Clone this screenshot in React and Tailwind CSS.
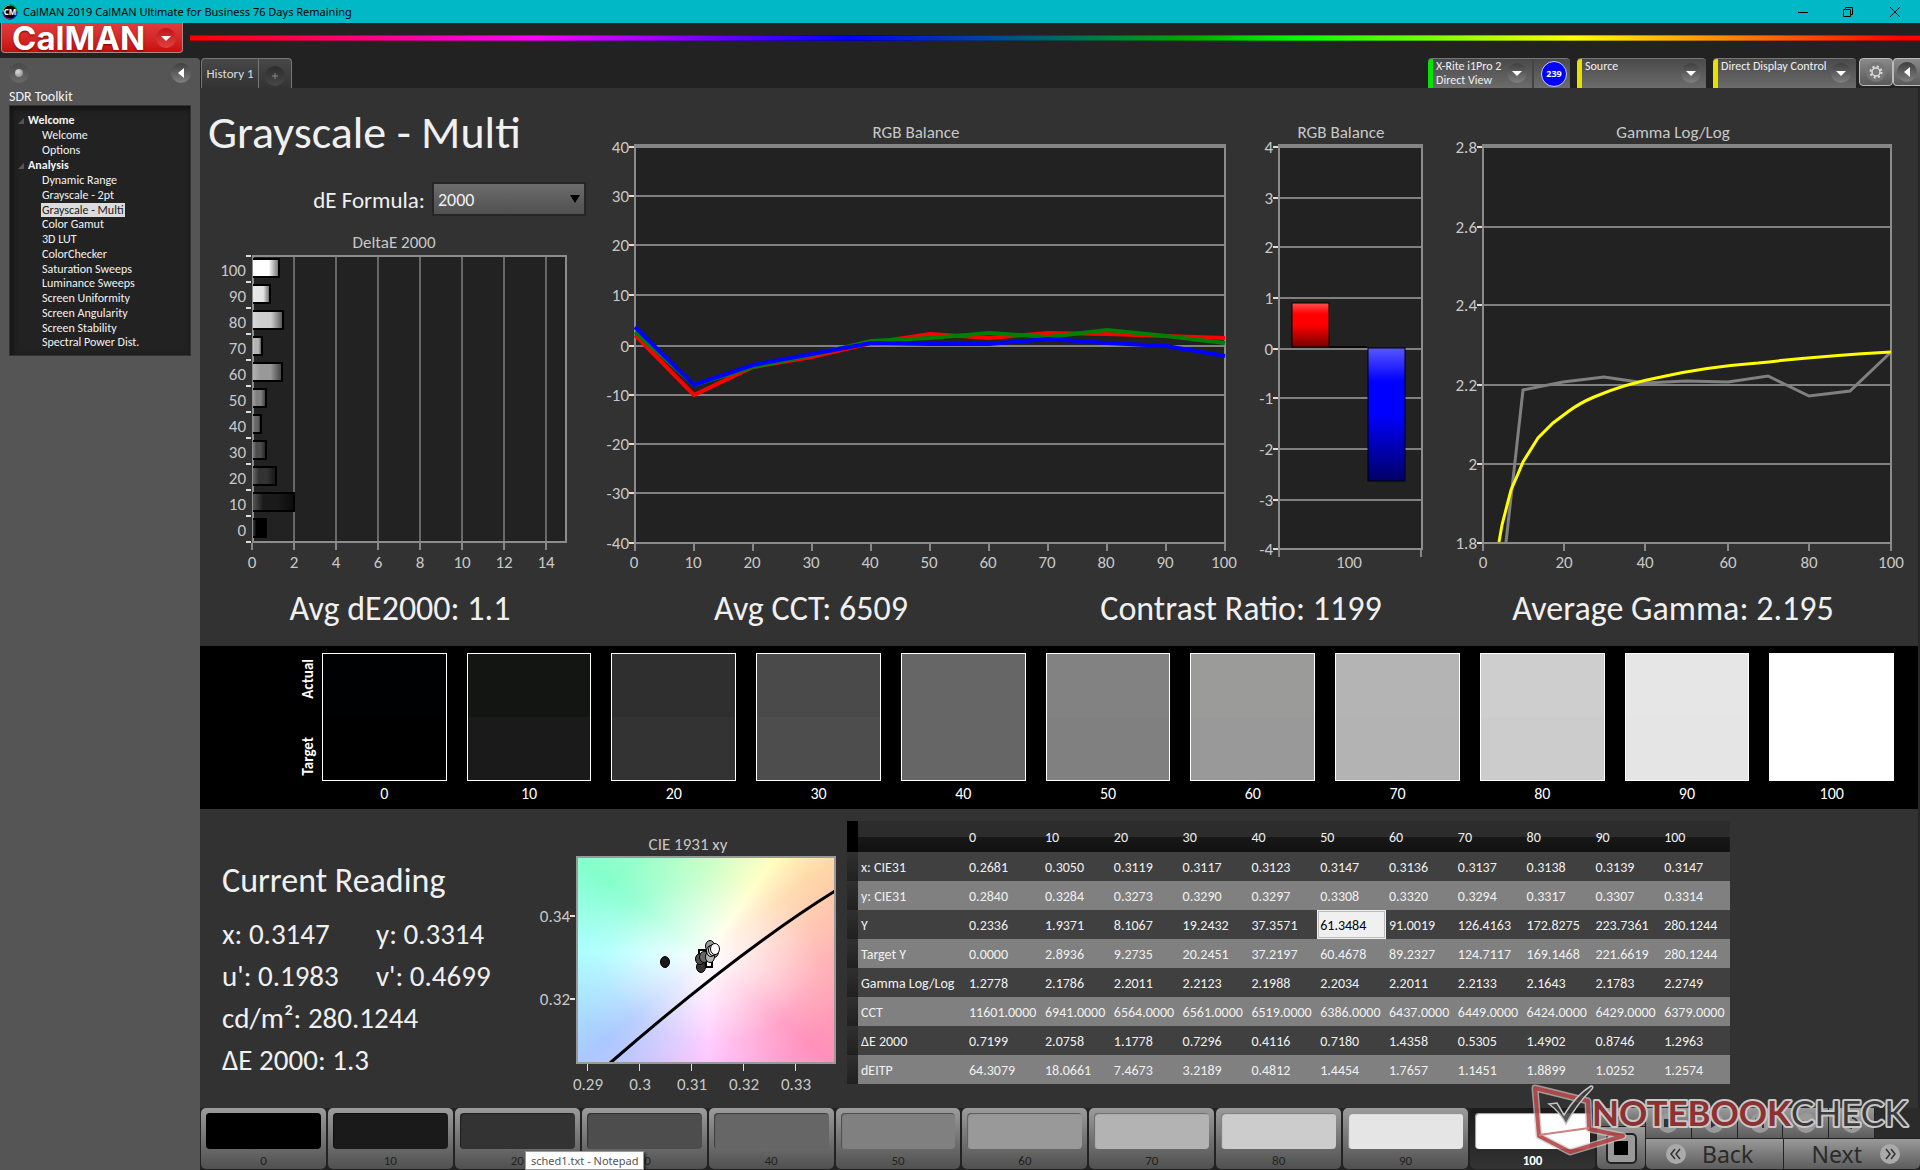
import React from "react";

const LEVELS = [0, 10, 20, 30, 40, 50, 60, 70, 80, 90, 100];

const SWATCHES = [
  ["#000103", "#000000"],
  ["#131513", "#1a1a1a"],
  ["#2f2f2f", "#333333"],
  ["#4a4a4a", "#4d4d4d"],
  ["#666666", "#666666"],
  ["#838282", "#808080"],
  ["#9b9b9a", "#999999"],
  ["#b4b4b4", "#b3b3b3"],
  ["#cecece", "#cccccc"],
  ["#e6e6e6", "#e5e5e5"],
  ["#ffffff", "#ffffff"],
];

const ROWS = [
  ["x: CIE31", "0.2681", "0.3050", "0.3119", "0.3117", "0.3123", "0.3147", "0.3136", "0.3137", "0.3138", "0.3139", "0.3147"],
  ["y: CIE31", "0.2840", "0.3284", "0.3273", "0.3290", "0.3297", "0.3308", "0.3320", "0.3294", "0.3317", "0.3307", "0.3314"],
  ["Y", "0.2336", "1.9371", "8.1067", "19.2432", "37.3571", "61.3484", "91.0019", "126.4163", "172.8275", "223.7361", "280.1244"],
  ["Target Y", "0.0000", "2.8936", "9.2735", "20.2451", "37.2197", "60.4678", "89.2327", "124.7117", "169.1468", "221.6619", "280.1244"],
  ["Gamma Log/Log", "1.2778", "2.1786", "2.2011", "2.2123", "2.1988", "2.2034", "2.2011", "2.2133", "2.1643", "2.1783", "2.2749"],
  ["CCT", "11601.0000", "6941.0000", "6564.0000", "6561.0000", "6519.0000", "6386.0000", "6437.0000", "6449.0000", "6424.0000", "6429.0000", "6379.0000"],
  ["ΔE 2000", "0.7199", "2.0758", "1.1778", "0.7296", "0.4116", "0.7180", "1.4358", "0.5305", "1.4902", "0.8746", "1.2963"],
  ["dEITP", "64.3079", "18.0661", "7.4673", "3.2189", "0.4812", "1.4454", "1.7657", "1.1451", "1.8899", "1.0252", "1.2574"],
];

const ANALYSIS = [
  "Dynamic Range",
  "Grayscale - 2pt",
  "Grayscale - Multi",
  "Color Gamut",
  "3D LUT",
  "ColorChecker",
  "Saturation Sweeps",
  "Luminance Sweeps",
  "Screen Uniformity",
  "Screen Angularity",
  "Screen Stability",
  "Spectral Power Dist.",
];

const GRID = "#808080";

/* ---------- window chrome ---------- */

function TitleBar() {
  return (
    <div className="flex h-[23px] items-center bg-[#00b8c6] text-black [font-family:'Noto_Sans','Open_Sans',sans-serif]">
      <svg className="ml-0.5 h-4 w-4" viewBox="0 0 16 16" aria-hidden="true">
        <circle cx="8" cy="8" r="7.5" fill="#000" />
        <path d="M1 8a7 7 0 0 1 7-7" fill="none" stroke="#d6d600" />
        <path d="M8 1a7 7 0 0 1 7 7" fill="none" stroke="#00c830" />
        <path d="M15 8a7 7 0 0 1-7 7" fill="none" stroke="#1848ff" />
        <path d="M8 15a7 7 0 0 1-7-7" fill="none" stroke="#e000a0" />
        <text x="8" y="11" fontSize="8" fontWeight="700" fill="#fff" textAnchor="middle">CM</text>
      </svg>
      <span className="ml-[5px] text-[11px] leading-4">CalMAN 2019 CalMAN Ultimate for Business 76 Days Remaining</span>
      <div className="ml-auto flex">
        <button aria-label="Minimize" className="flex h-[23px] w-[45px] items-center justify-center">
          <svg className="h-3 w-3" viewBox="0 0 12 12"><path d="M1 6.5h10" stroke="#000" /></svg>
        </button>
        <button aria-label="Restore" className="flex h-[23px] w-[45px] items-center justify-center">
          <svg className="h-3 w-3" viewBox="0 0 12 12" fill="none" stroke="#000"><path d="M1.500 3.500h7v7h-7zM3.500 3.500v-2h7v7h-2" /></svg>
        </button>
        <button aria-label="Close" className="flex h-[23px] w-[50px] items-center justify-center">
          <svg className="h-3 w-3" viewBox="0 0 12 12"><path d="M1 1l10 10M11 1L1 11" stroke="#000" /></svg>
        </button>
      </div>
    </div>
  );
}

function Header() {
  return (
    <div className="flex h-[35px] bg-[#222]">
      <button className="ml-px flex h-[30px] w-[182px] items-center rounded-b border border-t-0 border-[#a88] bg-gradient-to-b from-[#e03c3c] to-[#c80c0c] pl-2.5 text-white">
        <span className="text-[33px] leading-[28px] font-bold [font-family:Inter,sans-serif] [text-shadow:0_1px_2px_#700]">CalMAN</span>
        <span className="mr-1.5 ml-auto flex h-5 w-5 items-center justify-center rounded-full bg-gradient-to-b from-[#c01018] to-[#e04040]">
          <svg className="h-2.5 w-2.5" viewBox="0 0 10 10"><path d="M0 3h10L5 8z" fill="#fff" /></svg>
        </span>
      </button>
      <div className="mt-3 ml-[7px] h-[6px] flex-1 border-y border-black/30 bg-[linear-gradient(90deg,#f00_0%,#f0f_20%,#00f_38%,#0a0_58%,#0f0_64%,#ff0_80%,#f00_99%)]" />
    </div>
  );
}

function RoundArrow({ dir }) {
  return (
    <span className="flex h-5 w-5 shrink-0 items-center justify-center rounded-full bg-gradient-to-b from-[#404040] to-[#808080]">
      <svg className="h-2.5 w-2.5" viewBox="0 0 10 10">
        <path d={dir === "left" ? "M8 0v10L2 5z" : "M0 3h10L5 8z"} fill="#fff" />
      </svg>
    </span>
  );
}

/* ---------- sidebar ---------- */

function TreeHead({ children }) {
  return (
    <div className="flex h-[15px] items-center text-[12px] leading-[15px] font-bold">
      <svg className="mr-1 ml-2 h-1.5 w-1.5" viewBox="0 0 6 6"><path d="M6 0v6H0z" fill="#555" /></svg>
      {children}
    </div>
  );
}

function Sidebar() {
  return (
    <aside className="w-[200px] shrink-0 rounded-tr bg-[#555] px-[9px] text-[#f2f2f2]">
      <div className="flex h-[29px] items-center justify-between">
        <button aria-label="Record" className="flex h-5 w-5 items-center justify-center rounded-full bg-gradient-to-b from-[#484848] to-[#6a6a6a]">
          <span className="h-2 w-2 rounded-full bg-[radial-gradient(circle_at_35%_35%,#ddd,#777)]" />
        </button>
        <button aria-label="Collapse"><RoundArrow dir="left" /></button>
      </div>
      <h2 className="h-[18px] text-[14px] leading-[19px]">SDR Toolkit</h2>
      <nav className="h-[251px] border border-[#333] bg-[#222] pt-[7px] shadow-[inset_2px_3px_6px_#111]">
        <TreeHead>Welcome</TreeHead>
        <ul className="pl-8 text-[12px] leading-[15px]">
          <li><a href="#welcome">Welcome</a></li>
          <li><a href="#options">Options</a></li>
        </ul>
        <TreeHead>Analysis</TreeHead>
        <ul className="grid h-[177px] auto-rows-fr pl-8 text-[12px] leading-[14px]">
          {ANALYSIS.map((t) => (
            <li key={t}>
              <a href="#page" className={t === "Grayscale - Multi" ? "-mx-px inline-block bg-[#dcdcdc] px-px text-[#222]" : "inline-block"}>{t}</a>
            </li>
          ))}
        </ul>
      </nav>
    </aside>
  );
}

/* ---------- tab row ---------- */

function Device({ color, lines, width, extra }) {
  return (
    <div className={"flex h-[30px] rounded-t border-t border-[#777] bg-gradient-to-b from-[#4a4a4a] to-[#6c6c6c] " + width}>
      <button className="flex min-w-0 flex-1 items-start text-left">
        <span className={"h-full w-[5px] shrink-0 rounded-tl " + color} />
        <span className="ml-[3px] text-[12px] leading-[14px] whitespace-nowrap text-[#f0f0f0]">
          {lines.map((l) => <span key={l} className="block">{l}</span>)}
        </span>
        <span className="mt-1 mr-[5px] ml-auto"><RoundArrow /></span>
      </button>
      {extra}
    </div>
  );
}

function TabRow() {
  return (
    <div className="flex h-[30px] bg-[#222] pl-px">
      <button className="h-[30px] w-[58px] rounded-tl border-t border-r border-l border-[#777] bg-gradient-to-b from-[#484848] to-[#333] text-[13px] leading-[28px] text-[#ddd]">History 1</button>
      <button aria-label="Add history" className="flex h-[30px] w-[33px] items-center justify-center rounded-tr border-t border-r border-[#777] bg-gradient-to-b from-[#484848] to-[#333]">
        <span className="mt-1 flex h-5 w-5 items-center justify-center rounded-full bg-gradient-to-b from-[#2c2c2c] to-[#484848]">
          <svg className="h-2 w-2" viewBox="0 0 8 8"><path d="M1 4h6M4 1v6" stroke="#888" /></svg>
        </span>
      </button>
      <div className="ml-auto flex gap-[7px]">
        <Device
          color="bg-[#00e600]"
          width="w-[142px]"
          lines={["X-Rite i1Pro 2", "Direct View"]}
          extra={
            <span className="flex w-[38px] items-center justify-center border-l-2 border-[#444] pl-1">
              <span className="h-[26px] w-[26px] rounded-full border border-[#ccf] bg-[#00f] text-center text-[9px] leading-6 font-bold text-white [font-family:'Open_Sans',sans-serif]">239</span>
            </span>
          }
        />
        <Device color="bg-[#e8e000]" width="w-[129px]" lines={["Source"]} />
        <Device color="bg-[#e8e000]" width="w-[143px]" lines={["Direct Display Control"]} />
      </div>
      <button aria-label="Settings" className="ml-[3px] flex h-7 w-[34px] items-center justify-center rounded border border-[#bbb] bg-gradient-to-b from-[#8a8a8a] to-[#5a5a5a]">
        <svg className="h-5 w-5 rounded-full bg-[#777]" viewBox="0 0 20 20" fill="none" stroke="#ddd">
          <circle cx="10" cy="10" r="4" strokeWidth="1.500" />
          <circle cx="10" cy="10" r="5.500" strokeWidth="2" strokeDasharray="2.100 2.220" />
        </svg>
      </button>
      <button aria-label="Collapse panel" className="flex h-7 w-[27px] items-center justify-center rounded-l border border-r-0 border-[#bbb] bg-gradient-to-b from-[#8a8a8a] to-[#5a5a5a]">
        <RoundArrow dir="left" />
      </button>
    </div>
  );
}

/* ---------- charts ---------- */

function Label({ x, y, anchor = "middle", children }) {
  return <text x={x} y={y} textAnchor={anchor} fontSize="17" fill="#c8c8c8">{children}</text>;
}

function YAxis({ left, right, ticks, top, bottom }) {
  return (
    <g>
      <rect x={left} y={top} width={right - left} height={bottom - top} fill="#222" />
      {ticks.map(([t, y]) => (
        <g key={t}>
          <path d={`M${left} ${y}H${right}`} stroke={GRID} strokeWidth="2" />
          <path d={`M${left - 6} ${y}h6`} stroke="#ddd" strokeWidth="2" />
          <Label x={left - 6} y={y + 6} anchor="end">{t}</Label>
        </g>
      ))}
      <rect x={left} y={top} width={right - left} height={bottom - top} fill="none" stroke="#8c8c8c" strokeWidth="2" />
      <path d={`M${left} ${top + 1}H${right}`} stroke="#858585" strokeWidth="4" />
    </g>
  );
}

const DE_ENDS = [280, 271, 284, 263, 283, 267, 262, 267, 277, 295, 267];

function DeltaEChart() {
  return (
    <svg className="block w-full" viewBox="200 225 400 355" role="img" aria-label="DeltaE 2000">
      <defs>
        <linearGradient id="shade">
          <stop offset="0" stopColor="#fff" stopOpacity="0.25" />
          <stop offset="0.25" stopColor="#fff" stopOpacity="0" />
          <stop offset="0.6" stopColor="#000" stopOpacity="0" />
          <stop offset="1" stopColor="#000" stopOpacity="0.6" />
        </linearGradient>
      </defs>
      <Label x="394" y="248">DeltaE 2000</Label>
      <rect x="253" y="256" width="313" height="286" fill="#222" />
      {[0, 2, 4, 6, 8, 10, 12, 14].map((v, i) => (
        <g key={v}>
          {i > 0 && <path d={`M${252 + i * 42} 256v286`} stroke={GRID} strokeWidth="1.500" />}
          <path d={`M${252 + i * 42} 543v7`} stroke="#ddd" />
          <Label x={252 + i * 42} y="568">{v}</Label>
        </g>
      ))}
      <rect x="253" y="256" width="313" height="286" fill="none" stroke="#8c8c8c" strokeWidth="2" />
      {[...LEVELS].reverse().map((v, i) => (
        <g key={v}>
          <path d={`M246 ${256 + i * 26}h5`} stroke="#ddd" strokeWidth="2" />
          <rect x="253" y={259 + i * 26} width={DE_ENDS[i] - 254} height="18" fill={SWATCHES[10 - i][1]} />
          <rect x="253" y={259 + i * 26} width={DE_ENDS[i] - 254} height="18" fill="url(#shade)" />
          <path d={`M253 ${259 + i * 26}H${DE_ENDS[i] - 1}v18H253`} fill="none" stroke="#000" strokeWidth="2" />
          <Label x="246" y={276 + i * 26} anchor="end">{v}</Label>
        </g>
      ))}
      <path d="M246 542h5" stroke="#ddd" strokeWidth="2" />
    </svg>
  );
}

const BALANCE = [
  ["#f00", [335, 395, 367, 357, 343, 334, 338, 333, 334, 336, 338]],
  ["#008000", [332, 385, 367, 355, 341, 338, 333, 337, 330, 336, 343]],
  ["#00f", [327, 385, 365, 354, 343, 344, 344, 339, 343, 346, 356]],
];

function BalanceLines() {
  return (
    <svg className="block w-full" viewBox="600 88 640 492" role="img" aria-label="RGB Balance lines">
      <Label x="916" y="138">RGB Balance</Label>
      <YAxis left={635} right={1225} top={145} bottom={543} ticks={[["40", 147], ["30", 196], ["20", 245], ["10", 295], ["0", 346], ["-10", 395], ["-20", 444], ["-30", 493], ["-40", 543]]} />
      {LEVELS.map((v, i) => (
        <g key={v}>
          <path d={`M${635 + i * 59} 544v7`} stroke="#ddd" />
          <Label x={634 + i * 59} y="568">{v}</Label>
        </g>
      ))}
      {BALANCE.map(([c, ys]) => (
        <polyline key={c} points={ys.map((y, i) => `${635 + i * 59},${y}`).join(" ")} fill="none" stroke={c} strokeWidth="4" />
      ))}
    </svg>
  );
}

function BalanceBars() {
  return (
    <svg className="block w-full" viewBox="1240 88 200 492" role="img" aria-label="RGB Balance bars">
      <defs>
        <linearGradient id="red" x2="0" y2="1">
          <stop offset="0" stopColor="#ff5050" /><stop offset="0.25" stopColor="#f00" />
          <stop offset="0.5" stopColor="#f00" /><stop offset="1" stopColor="#700" />
        </linearGradient>
        <linearGradient id="blue" x2="0" y2="1">
          <stop offset="0" stopColor="#5858ff" /><stop offset="0.25" stopColor="#00f" />
          <stop offset="0.5" stopColor="#00f" /><stop offset="1" stopColor="#006" />
        </linearGradient>
      </defs>
      <Label x="1341" y="138">RGB Balance</Label>
      <YAxis left={1279} right={1422} top={145} bottom={549} ticks={[["4", 147], ["3", 198], ["2", 247], ["1", 298], ["0", 349], ["-1", 398], ["-2", 449], ["-3", 500], ["-4", 549]]} />
      <path d="M1279 550v7M1421 550v7" stroke="#ddd" />
      <Label x="1349" y="568">100</Label>
      <path d="M1329 347h38" stroke="#000" strokeWidth="1.500" />
      <rect x="1292" y="303" width="37" height="44" fill="url(#red)" stroke="#000" />
      <rect x="1368" y="348" width="37" height="133" fill="url(#blue)" stroke="#000" />
    </svg>
  );
}

function GammaChart() {
  return (
    <svg className="block w-full" viewBox="1440 88 478 492" role="img" aria-label="Gamma Log/Log">
      <Label x="1673" y="138">Gamma Log/Log</Label>
      <YAxis left={1483} right={1891} top={145} bottom={543} ticks={[["2.8", 147], ["2.6", 227], ["2.4", 305], ["2.2", 385], ["2", 464], ["1.8", 543]]} />
      {[[0, 1483], [20, 1564], [40, 1645], [60, 1728], [80, 1809], [100, 1891]].map(([t, x]) => (
        <g key={t}>
          <path d={`M${x} 544v7`} stroke="#ddd" />
          <Label x={x} y="568">{t}</Label>
        </g>
      ))}
      <polyline points="1506,542 1523,390 1563,382 1604,377 1645,383 1686,381 1728,382 1768,376 1809,396 1850,391 1890,353" fill="none" stroke="#808080" strokeWidth="3" />
      <path d="M1499 542L1502 525L1511 490L1518 474L1523 462L1538 438L1553 423L1569 411Q1580 403 1594 397Q1624 384 1661 377Q1705 367 1758 363Q1820 356 1891 352" fill="none" stroke="#ff0" strokeWidth="3" />
    </svg>
  );
}

function CieChart() {
  const dots = [[665, 962, "#1a1a1a"], [701, 967, "#333"], [700, 959, "#4d4d4d"], [704, 957, "#666"], [714, 952, "#808080"], [710, 946, "#999"], [710, 957, "#b3b3b3"], [711, 951, "#ccc"], [713, 950, "#e5e5e5"], [715, 949, "#fff"]];
  return (
    <svg className="block w-full" viewBox="530 809 317 298" role="img" aria-label="CIE 1931 xy">
      <Label x="688" y="850">CIE 1931 xy</Label>
      <foreignObject x="577" y="857" width="258" height="206">
        <div className="h-full w-full bg-[radial-gradient(ellipse_farthest-side_at_52%_50%,#fff_0%,rgba(255,255,255,0.6)_40%,rgba(255,255,255,0.150)_80%,transparent_110%),conic-gradient(at_50%_48%,#c4ffc4_0deg,#ffffc0_35deg,#ffd8a8_53deg,#ffacac_90deg,#ff90bb_130deg,#ffc4ff_178deg,#aac8ff_230deg,#a8ffff_272deg,#84ffcc_307deg,#c4ffc4_360deg)]" />
      </foreignObject>
      <path d="M610 1063Q740 950 835 891" fill="none" stroke="#000" strokeWidth="3" />
      <rect x="577" y="857" width="258" height="206" fill="none" stroke="#999" strokeWidth="2" />
      <g fill="none" stroke="#000" strokeWidth="2"><rect x="699" y="950" width="7" height="8" /><rect x="706" y="960" width="6" height="7" /></g>
      {dots.map(([x, y, f], i) => <ellipse key={i} cx={x} cy={y} rx="4.500" ry="5.500" fill={f} stroke="#000" />)}
      {[["0.29", 587], ["0.3", 639], ["0.31", 691], ["0.32", 743], ["0.33", 795]].map(([t, x]) => (
        <g key={t}><path d={`M${x}.5 1064v7`} stroke="#ddd" /><Label x={x + 1} y="1090">{t}</Label></g>
      ))}
      {[["0.34", 916], ["0.32", 999]].map(([t, y]) => (
        <g key={t}><path d={`M570 ${y}h5`} stroke="#ddd" strokeWidth="2" /><Label x="570" y={y + 6} anchor="end">{t}</Label></g>
      ))}
    </svg>
  );
}

/* ---------- panels ---------- */

function Overview() {
  return (
    <section className="text-[#f0f0f0]">
      <div className="grid grid-cols-[400fr_640fr_200fr_478fr]">
        <div className="min-w-0">
          <h1 className="h-[88px] pt-4 pl-2 text-[46px] leading-[56px]">Grayscale - Multi</h1>
          <div className="flex h-[49px] items-start justify-end pt-1.5 pr-3.5">
            <label htmlFor="formula" className="mr-[7px] text-[23px] leading-[36px]">dE Formula:</label>
            <div className="relative w-[154px]">
              <select id="formula" className="h-[34px] w-full appearance-none border-2 border-[#262626] bg-gradient-to-b from-[#6c6c6c] to-[#505050] pt-0.5 pl-1 text-[18px] text-[#f0f0f0]">
                <option>2000</option>
              </select>
              <svg className="pointer-events-none absolute top-3 right-1.5 h-2.5 w-2.5" viewBox="0 0 10 10"><path d="M0 1h10L5 9z" fill="#000" /></svg>
            </div>
          </div>
          <DeltaEChart />
        </div>
        <div className="min-w-0"><BalanceLines /></div>
        <div className="min-w-0"><BalanceBars /></div>
        <div className="min-w-0"><GammaChart /></div>
      </div>
      <div className="grid h-[66px] grid-cols-[400fr_422fr_438fr_426fr_32fr] pt-[7px] text-center text-[34px] leading-[44px]">
        <p>Avg dE2000: 1.1</p>
        <p>Avg CCT: 6509</p>
        <p>Contrast Ratio: 1199</p>
        <p>Average Gamma: 2.195</p>
      </div>
    </section>
  );
}

function SwatchStrip() {
  return (
    <section className="flex h-[163px] bg-black pt-[7px] pr-6 text-white">
      <div className="flex h-32 w-[122px] flex-col items-end justify-between py-1.5 pr-[5px] text-[15px] leading-[18px] font-bold">
        <span className="rotate-180 [writing-mode:vertical-rl]">Actual</span>
        <span className="rotate-180 [writing-mode:vertical-rl]">Target</span>
      </div>
      <div className="flex flex-1 gap-5">
        {LEVELS.map((v, i) => (
          <div key={v} className="flex-1 text-center text-[16px] leading-[26px]">
            <div className="flex h-32 flex-col border border-white">
              <div className="flex-1" style={{ background: SWATCHES[i][0] }} />
              <div className="flex-1" style={{ background: SWATCHES[i][1] }} />
            </div>
            {v}
          </div>
        ))}
      </div>
    </section>
  );
}

function Reading() {
  return (
    <div className="min-w-0 pt-12 pl-[22px] whitespace-nowrap text-[#f0f0f0]">
      <h2 className="h-14 text-[34px] leading-[48px]">Current Reading</h2>
      <div className="grid grid-cols-2 text-[29px] leading-[42px]">
        <span>x: 0.3147</span><span>y: 0.3314</span>
        <span>u': 0.1983</span><span>v': 0.4699</span>
        <span className="col-span-2">cd/m²: 280.1244</span>
        <span className="col-span-2">ΔE 2000: 1.3</span>
      </div>
    </div>
  );
}

function DataTable() {
  return (
    <table className="mt-3 w-full table-fixed border-collapse self-start text-left text-[14px] leading-[18px] text-[#f0f0f0]">
      <colgroup>
        <col className="w-[11px]" />
        <col className="w-[108px]" />
        <col className="w-[76px]" />
        {LEVELS.slice(1).map((v) => <col key={v} />)}
      </colgroup>
      <thead>
        <tr className="h-[31px] bg-[linear-gradient(#2c2c2c_50%,#181818_50%,#111)]">
          <td className="bg-black" />
          <td />
          {LEVELS.map((v) => <th key={v} scope="col" className="pt-0.5 pl-[3px] font-normal">{v}</th>)}
        </tr>
      </thead>
      <tbody>
        {ROWS.map(([name, ...vals]) => (
          <tr key={name} className="h-[29px] bg-[#404040] even:bg-[#808080]">
            <td className="bg-gradient-to-b from-[#303030] to-[#202020]" />
            <th scope="row" className="pt-0.5 pl-[3px] font-normal whitespace-nowrap">{name}</th>
            {vals.map((v, i) => (
              <td key={i} className={v === "61.3484" ? "bg-[#f0f0f0] pt-0.5 pl-[3px] text-black outline outline-1 -outline-offset-2 outline-[#bbb]" : "pt-0.5 pl-[3px]"}>{v}</td>
            ))}
          </tr>
        ))}
      </tbody>
    </table>
  );
}

/* ---------- bottom bar ---------- */

const TRANSPORT = [
  ["Stop", "M6 6h8v8H6z"],
  ["Play", "M7 5l8 5-8 5z"],
  ["Play to end", "M5 5l6 5-6 5zM12 5h2v10h-2z"],
  ["Loop", "M3 10q3.500-6 7 0t7 0l-2 2q-2 2-5-2t-5 2z"],
  ["Refresh", "M10 4a6 6 0 0 1 6 6h-2a4 4 0 0 0-4-4zM10 16a6 6 0 0 1-6-6h2a4 4 0 0 0 4 4z"],
];

const KEY = "bg-gradient-to-b from-[#9a9a9a] to-[#5c5c5c]";

function Watermark() {
  return (
    <svg className="pointer-events-none absolute right-0 bottom-0 h-[95px] w-[400px]" viewBox="0 0 400 95" role="img" aria-label="Notebookcheck">
      <g fill="none" strokeLinejoin="round">
        <path d="M15 13L68 26L69 54L103 61L50 77L19 61Z" stroke="#ccc" strokeWidth="7" opacity="0.7" />
        <path d="M15 13L68 26L69 54L103 61L50 77L19 61Z" stroke="#b02a2e" strokeWidth="4" opacity="0.75" />
        <path d="M19 60L69 53" stroke="#cc8080" strokeWidth="2" />
      </g>
      <path d="M29 29l8-1 7 12q12-20 27-29q3 0 1 3q-16 16-26 35q-6-12-17-20z" fill="#3c3c3c" fillOpacity="0.85" stroke="#c4c4c4" strokeWidth="1.500" />
      <g strokeLinejoin="round" className="[font-family:Lato,sans-serif]" paintOrder="stroke" stroke="#c8c8c8" strokeWidth="4">
        <text x="72" y="51" fontSize="35" fontWeight="700" fill="#8c3232">NOTEBOOK</text>
        <text x="271" y="51" fontSize="35" fill="#3a3a3a">CHECK</text>
      </g>
    </svg>
  );
}

function BottomBar() {
  return (
    <footer className="relative flex h-[62px] bg-[#222] pl-px">
      <div className="flex flex-1 gap-0.5">
        {LEVELS.map((v, i) => (
          <button
            key={v}
            className={
              "flex h-[61px] flex-1 flex-col rounded-[5px] px-[5px] pt-[5px] text-[13px] leading-5 " +
              (v === 100 ? "bg-gradient-to-b from-[#1a1a1a] to-[#333] font-bold text-white" : "bg-gradient-to-b from-[#9c9c9c] to-[#505050] text-[#222]")
            }
          >
            <span className="block h-9 w-full shrink-0 rounded-[4px] shadow-[inset_1px_1px_1px_#0006]" style={{ background: SWATCHES[i][1] }} />
            <span className="block w-full pt-0.5 text-center">{v}</span>
          </button>
        ))}
      </div>
      <div className="mr-px ml-0.5 flex w-12 flex-col gap-px">
        <button aria-label="Expand" className={"flex h-[18px] items-center justify-center rounded-t-[5px] " + KEY}>
          <svg className="h-2 w-3" viewBox="0 0 12 8"><path d="M1 7l5-5 5 5" fill="none" stroke="#333" strokeWidth="2" /></svg>
        </button>
        <button aria-label="Stop reading" className={"flex h-[42px] items-center justify-center rounded-b-[5px] " + KEY}>
          <span className="flex h-[31px] w-[31px] items-center justify-center rounded-[5px] border-2 border-[#222] bg-[#999]">
            <span className="h-3.5 w-3.5 bg-black" />
          </span>
        </button>
      </div>
      <div className="flex w-[274px] flex-col gap-px">
        <div className="flex h-[30px] gap-px">
          {TRANSPORT.map(([name, d]) => (
            <button key={name} aria-label={name} className={"flex flex-1 items-center justify-center " + KEY}>
              <svg className="h-5 w-5 rounded-full bg-[#999]" viewBox="0 0 20 20"><path d={d} fill="#333" /></svg>
            </button>
          ))}
          <span className="flex-1 bg-[#2b2b2b]" />
        </div>
        <div className="flex h-[30px] gap-px text-[23px] leading-[30px] text-[#2a2a2a] [font-family:'Noto_Sans','Open_Sans',sans-serif]">
          <button className={"flex flex-1 items-center rounded-bl-[5px] pl-5 " + KEY}>
            <svg className="mr-4 h-5 w-5 rounded-full bg-[#aaa]" viewBox="0 0 20 20"><path d="M9 5l-4 5 4 5M14 5l-4 5 4 5" fill="none" stroke="#333" strokeWidth="1.500" /></svg>
            Back
          </button>
          <button className={"flex flex-1 items-center justify-end rounded-br-[5px] pr-5 " + KEY}>
            Next
            <svg className="ml-[18px] h-5 w-5 rounded-full bg-[#aaa]" viewBox="0 0 20 20"><path d="M6 5l4 5-4 5M11 5l4 5-4 5" fill="none" stroke="#333" strokeWidth="1.500" /></svg>
          </button>
        </div>
      </div>
      <div role="tooltip" className="absolute bottom-0 left-[325px] border border-[#999] bg-white px-[5px] text-[11px] leading-[17px] text-[#555] shadow-[2px_2px_2px_#0008] [font-family:'Noto_Sans','Open_Sans',sans-serif]">
        sched1.txt - Notepad
      </div>
      <Watermark />
    </footer>
  );
}

export default function App() {
  return (
    <div className="flex min-h-screen flex-col bg-[#222] [font-family:Carlito,Lato,sans-serif]">
      <TitleBar />
      <Header />
      <div className="flex flex-1">
        <Sidebar />
        <main className="flex min-w-0 flex-1 flex-col">
          <TabRow />
          <div className="flex flex-1 flex-col border-r-2 border-[#262626] bg-[#323232]">
            <Overview />
            <SwatchStrip />
            <section className="grid flex-1 grid-cols-[330fr_317fr_883fr_188fr]">
              <Reading />
              <div className="min-w-0"><CieChart /></div>
              <DataTable />
            </section>
          </div>
          <BottomBar />
        </main>
      </div>
    </div>
  );
}
